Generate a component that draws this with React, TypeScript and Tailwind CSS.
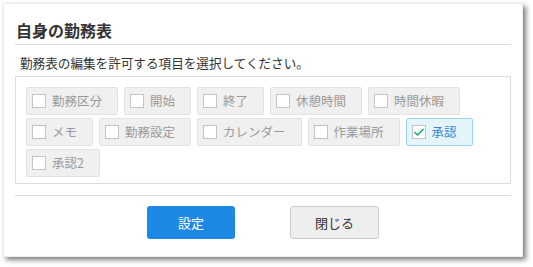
import { Check } from 'lucide-react';

interface Item {
  label: string;
  checked?: boolean;
}

const rows: Item[][] = [
  [{ label: '勤務区分' }, { label: '開始' }, { label: '終了' }, { label: '休憩時間' }, { label: '時間休暇' }],
  [{ label: 'メモ' }, { label: '勤務設定' }, { label: 'カレンダー' }, { label: '作業場所' }, { label: '承認', checked: true }],
  [{ label: '承認2' }],
];

const font = { fontFamily: '"Noto Sans CJK JP", "Noto Sans", sans-serif' };

const CheckItem = ({ label, checked }: Item) => (
  <div
    className={`flex items-center h-[28px] pl-[5px] pr-[15px] rounded-[2px] border ${
      checked ? 'bg-[#e3f5fb] border-[#9fd4ee] text-[#3b86d4]' : 'bg-[#f0f0f0] border-[#e2e2e2] text-[#9a9a9a]'
    }`}
  >
    <span className="flex items-center justify-center w-[14px] h-[14px] bg-white border border-[#c4c4c4]">
      {checked && <Check className="w-[13px] h-[13px] text-[#1fae78]" strokeWidth={3.5} />}
    </span>
    <span className="ml-[6px] text-[12.5px] leading-none">{label}</span>
  </div>
);

const App = () => {
  return (
    <div className="w-[533px] h-[267px] bg-white p-[3px]" style={font}>
      <div className="w-[520px] h-[254px] bg-white border border-[#eeeeee] shadow-[3px_3px_5px_rgba(0,0,0,0.5)] px-[11px] pt-[13px] flex flex-col">
        <h1 className="pl-[1px] text-[16px] leading-[26px] font-bold text-[#333]">自身の勤務表</h1>
        <div className="h-px bg-[#dddddd] mt-[1px]" />
        <p className="mt-[9px] pl-[5px] text-[12.6px] leading-[18px] text-[#333]">
          勤務表の編集を許可する項目を選択してください。
        </p>
        <div className="mt-[4px] border border-[#dddddd] pt-[10px] pb-[6px] px-[10px] flex flex-col gap-[3px]">
          {rows.map((row, i) => (
            <div key={i} className="flex gap-[6px]">
              {row.map((item) => (
                <CheckItem key={item.label} {...item} />
              ))}
            </div>
          ))}
        </div>
        <div className="h-px bg-[#dddddd] mt-[11px]" />
        <div className="flex justify-center gap-[55px] mt-[10px]">
          <button className="w-[88px] h-[33px] rounded-[3px] bg-[#1e88e5] text-white text-[13px]">設定</button>
          <button className="w-[89px] h-[33px] rounded-[3px] bg-[#eeeeee] border border-[#cccccc] text-[#333] text-[13px]">
            閉じる
          </button>
        </div>
      </div>
    </div>
  );
};

export default App;
